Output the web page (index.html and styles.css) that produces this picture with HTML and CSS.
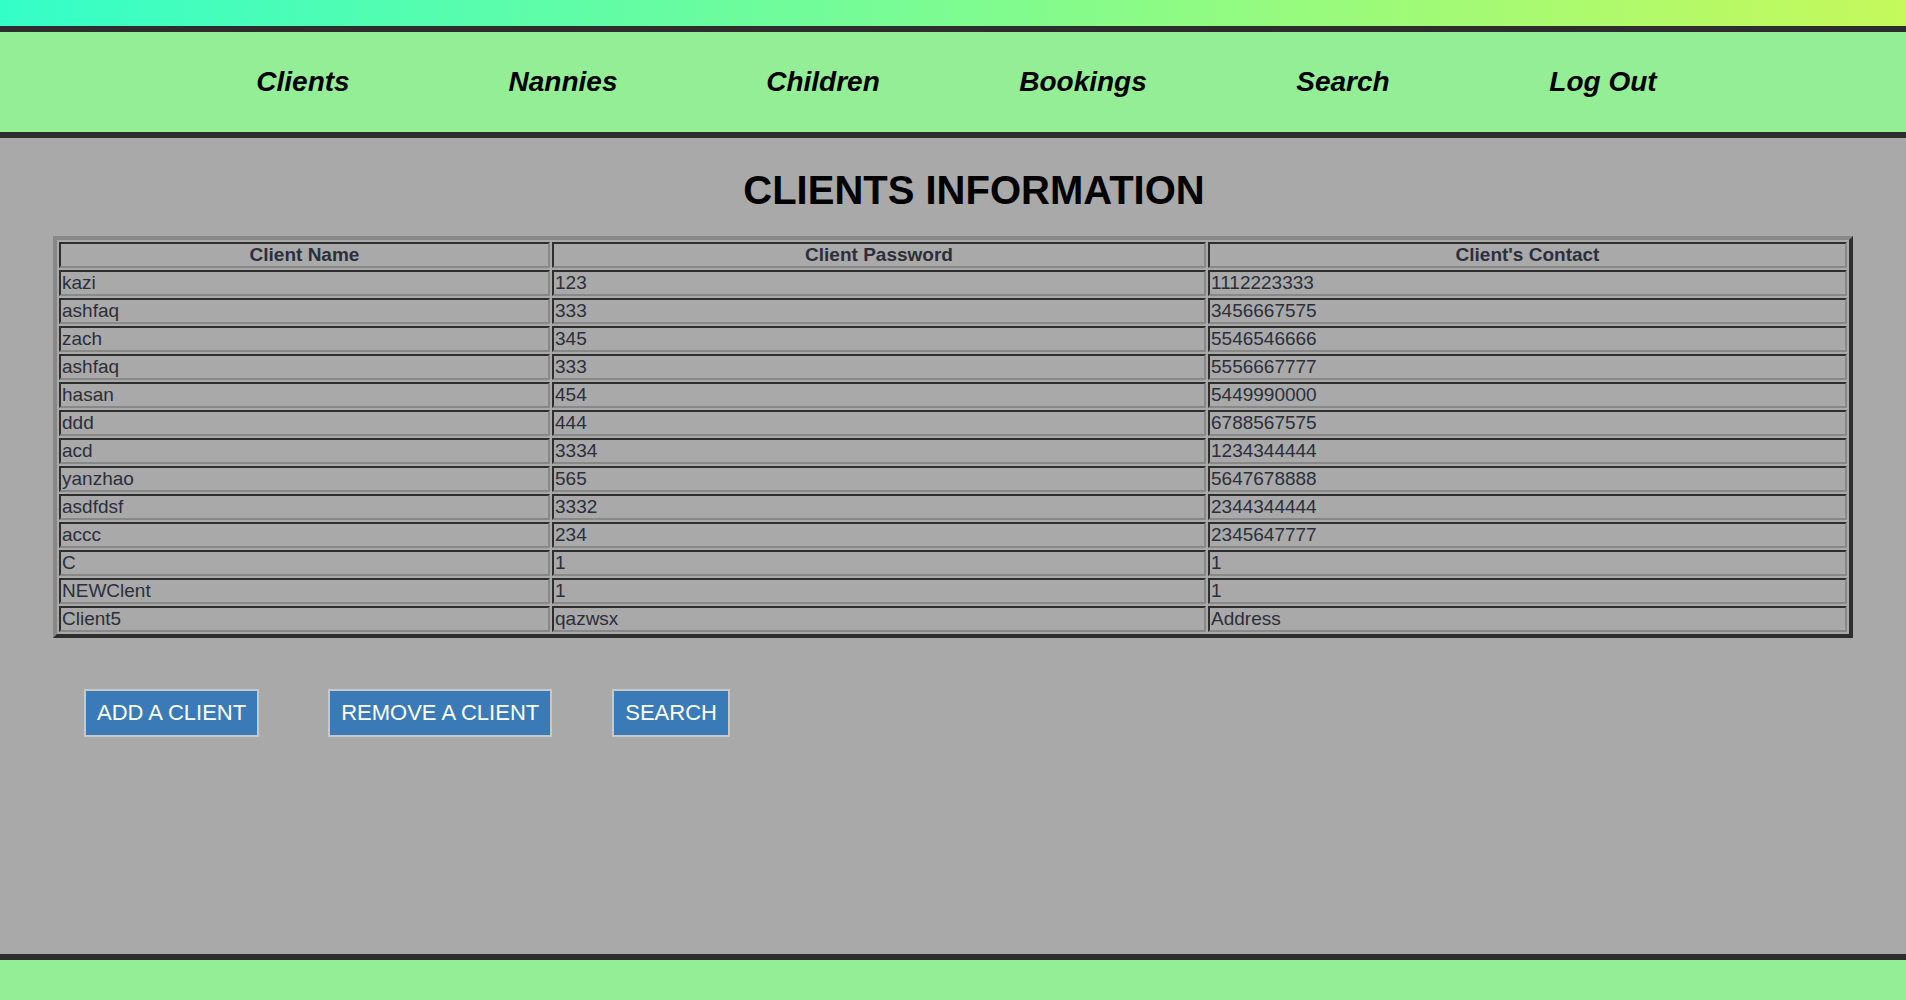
FILE: index.html
```html
<!DOCTYPE html>
<html lang="en">
<head>
<meta charset="utf-8">
<title>Clients Information</title>
<link rel="stylesheet" href="styles.css">
</head>
<body>
<div class="topbar"></div>
<nav class="nav">
  <a class="nav-item" href="#">Clients</a>
  <a class="nav-item" href="#">Nannies</a>
  <a class="nav-item" href="#">Children</a>
  <a class="nav-item" href="#">Bookings</a>
  <a class="nav-item" href="#">Search</a>
  <a class="nav-item" href="#">Log Out</a>
</nav>
<main class="main">
  <h1 class="title">CLIENTS INFORMATION</h1>
  <table class="clients">
    <colgroup>
      <col class="c1"><col class="c2"><col class="c3">
    </colgroup>
    <thead>
      <tr><th>Client Name</th><th>Client Password</th><th>Client's Contact</th></tr>
    </thead>
    <tbody>
      <tr><td>kazi</td><td>123</td><td>1112223333</td></tr>
      <tr><td>ashfaq</td><td>333</td><td>3456667575</td></tr>
      <tr><td>zach</td><td>345</td><td>5546546666</td></tr>
      <tr><td>ashfaq</td><td>333</td><td>5556667777</td></tr>
      <tr><td>hasan</td><td>454</td><td>5449990000</td></tr>
      <tr><td>ddd</td><td>444</td><td>6788567575</td></tr>
      <tr><td>acd</td><td>3334</td><td>1234344444</td></tr>
      <tr><td>yanzhao</td><td>565</td><td>5647678888</td></tr>
      <tr><td>asdfdsf</td><td>3332</td><td>2344344444</td></tr>
      <tr><td>accc</td><td>234</td><td>2345647777</td></tr>
      <tr><td>C</td><td>1</td><td>1</td></tr>
      <tr><td>NEWClent</td><td>1</td><td>1</td></tr>
      <tr><td>Client5</td><td>qazwsx</td><td>Address</td></tr>
    </tbody>
  </table>
  <div class="actions">
    <button class="btn" type="button">ADD A CLIENT</button>
    <button class="btn btn-remove" type="button">REMOVE A CLIENT</button>
    <button class="btn btn-search" type="button">SEARCH</button>
  </div>
</main>
<footer class="footer"></footer>
</body>
</html>
```
FILE: styles.css
```css
html, body {
  margin: 0;
  padding: 0;
}
body {
  font-family: "Liberation Sans", Arial, sans-serif;
  background: #a9a9a9;
}
.topbar {
  height: 26px;
  background: linear-gradient(to right, #34fec8, #c5f95b);
}
.nav {
  display: flex;
  justify-content: center;
  align-items: center;
  height: 100px;
  background: #93ee95;
  border-top: 6px solid #2d2d2d;
  border-bottom: 6px solid #2d2d2d;
}
.nav-item {
  width: 260px;
  text-align: center;
  color: #000;
  text-decoration: none;
  font-weight: bold;
  font-style: italic;
  font-size: 28px;
}
.main {
  min-height: 816px;
  box-sizing: border-box;
  padding-top: 29px;
  background: #a9a9a9;
}
.title {
  margin: 0 0 23px;
  padding-left: 42px;
  text-align: center;
  font-size: 40px;
  line-height: 46px;
  font-weight: bold;
  color: #000;
}
.clients {
  width: 1800px;
  margin: 0 auto;
  table-layout: fixed;
  border-collapse: separate;
  border-spacing: 2px;
  border-style: solid;
  border-width: 4px;
  border-color: #888 #2e2e2e #2e2e2e #888;
  color: #2c2f3b;
  font-size: 19px;
}
.c1 { width: 491px; }
.c2 { width: 654px; }
.c3 { width: 639px; }
.clients th,
.clients td {
  padding: 1px;
  line-height: 20px;
  border-style: solid;
  border-width: 2px;
  border-color: #2e2e2e #888 #888 #2e2e2e;
  white-space: nowrap;
  overflow: hidden;
}
.clients th {
  font-weight: bold;
  text-align: center;
  font-size: 19px;
}
.clients td {
  text-align: left;
}
.actions {
  display: flex;
  margin-top: 51px;
  padding-left: 84px;
}
.btn {
  font-family: "Liberation Sans", Arial, sans-serif;
  font-size: 22px;
  color: #fff;
  background: #3a7bb7;
  border: 2px solid #c8c8c8;
  height: 48px;
  padding: 0 11px;
  margin: 0;
  cursor: pointer;
}
.btn-remove {
  margin-left: 69px;
}
.btn-search {
  margin-left: 60px;
}
.footer {
  height: 40px;
  background: #93ee95;
  border-top: 6px solid #2d2d2d;
}
```
